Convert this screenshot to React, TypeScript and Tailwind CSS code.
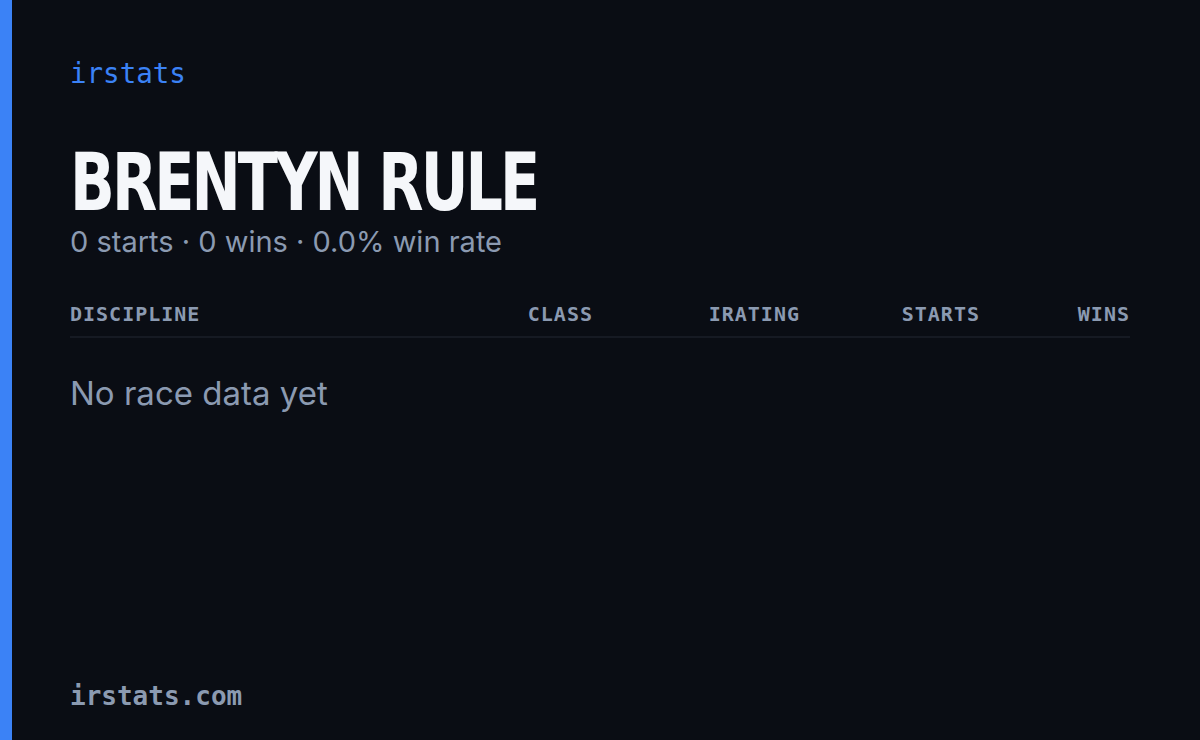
const columns = ["DISCIPLINE", "CLASS", "IRATING", "STARTS", "WINS"];

export default function App() {
  return (
    <div className="flex h-[740px] w-[1200px] bg-[#0a0d14] overflow-hidden">
      {/* accent bar */}
      <div className="w-[12px] shrink-0 bg-[#3b82f6]" />

      <div className="flex flex-1 flex-col pl-[58px] pr-[70px] pt-[57px] pb-[28px]">
        <div className="font-['DejaVu_Sans_Mono',monospace] text-[27.5px] leading-[32px] text-[#3b82f6]">
          irstats
        </div>

        {/* condensed display title */}
        <h1 className="mt-[59px] origin-left scale-x-[0.735] whitespace-nowrap font-['DejaVu_Sans',sans-serif] text-[80px] font-bold leading-[70px] tracking-[-4px] text-[#f5f7fa]">
          BRENTYN RULE
        </h1>

        <p className="mt-[6px] font-['Inter',sans-serif] text-[29px] leading-[36px] text-[#8b9ab1]">
          0 starts · 0 wins · 0.0% win rate
        </p>

        <div className="mt-[42px] grid grid-cols-[1fr_100px_207px_180px_150px] border-b-2 border-[#161a23] pb-[10px] font-['DejaVu_Sans_Mono',monospace] text-[20px] font-bold leading-[24px] tracking-[1px] text-[#8b9ab1]">
          {columns.map((c, i) => (
            <div key={c} className={i === 0 ? "text-left" : "text-right"}>
              {c}
            </div>
          ))}
        </div>

        <p className="mt-[35px] font-['Inter',sans-serif] text-[33px] leading-[40px] text-[#8b9ab1]">
          No race data yet
        </p>

        <div className="mt-auto font-['DejaVu_Sans_Mono',monospace] text-[26px] font-bold leading-[32px] text-[#8b9ab1]">
          irstats.com
        </div>
      </div>
    </div>
  );
}
